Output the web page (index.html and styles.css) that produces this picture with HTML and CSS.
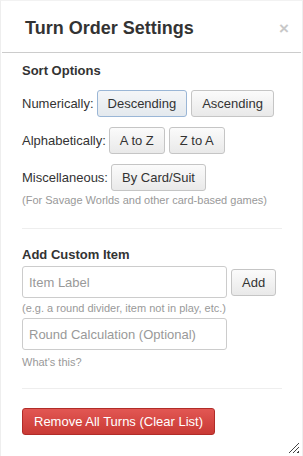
FILE: index.html
```html
<!DOCTYPE html>
<html>
  <head>
    <meta charset="utf-8">
    <title>Turn Order Settings</title>
    <link rel="stylesheet" href="styles.css">
  </head>
  <body>
    <div class="dialog">
      <header class="dialog-header">
        <h3>Turn Order Settings</h3>
        <span class="close">&times;</span>
      </header>
      <section class="dialog-body">
        <h4>Sort Options</h4>
        <div class="row">
          <span class="label">Numerically:</span>
          <button class="btn active">Descending</button>
          <button class="btn">Ascending</button>
        </div>
        <div class="row">
          <span class="label">Alphabetically:</span>
          <button class="btn">A to Z</button>
          <button class="btn">Z to A</button>
        </div>
        <div class="row last">
          <span class="label">Miscellaneous:</span>
          <button class="btn">By Card/Suit</button>
        </div>
        <p class="help">(For Savage Worlds and other card-based games)</p>

        <hr>

        <h4 class="tight">Add Custom Item</h4>
        <div class="add-row">
          <input type="text" placeholder="Item Label">
          <button class="btn">Add</button>
        </div>
        <p class="help below">(e.g. a round divider, item not in play, etc.)</p>
        <input type="text" placeholder="Round Calculation (Optional)">
        <p class="help what">What's this?</p>

        <hr class="bottom">

        <button class="btn danger">Remove All Turns (Clear List)</button>
      </section>
      <span class="grip"></span>
    </div>
  </body>
</html>
```

FILE: styles.css
```css
body, html {
  margin: 0;
  height: 100%;
  background: #fff;
}
body {
  font-family: "Liberation Sans", Arial, sans-serif;
  font-size: 13px;
  color: #333;
}
.dialog {
  position: relative;
  box-sizing: border-box;
  height: 100%;
  border-left: 1px solid #eee;
  border-right: 1px solid #eee;
  border-top: 1px solid #f2f2f2;
}
.dialog-header {
  display: flex;
  align-items: center;
  height: 51px;
  padding: 0 12px 0 23px;
  margin: 0 1px;
  border-bottom: 1px solid #ccc;
}
.dialog-header h3 {
  flex: 1;
  margin: 0;
  padding-top: 4px;
  font-size: 18px;
  font-weight: 700;
  color: #333;
}
.close {
  font-size: 17px;
  font-weight: 700;
  color: #c8c8c8;
  padding-top: 4px;
}
.dialog-body {
  padding: 10px 20px 0 21px;
}
h4 {
  margin: 0 0 11px;
  font-size: 13px;
  line-height: 16px;
  font-weight: 700;
}
h4.tight {
  margin-bottom: 3px;
}
.row {
  display: flex;
  align-items: center;
  margin-bottom: 10px;
}
.row.last {
  margin-bottom: 3px;
}
.label {
  margin-right: 3px;
}
.btn {
  font-family: inherit;
  font-size: 13px;
  color: #333;
  height: 27px;
  padding: 0 10px;
  margin-right: 4px;
  border: 1px solid #c5c5c5;
  border-radius: 3px;
  background: linear-gradient(#fbfbfb, #e9e9e9);
  cursor: pointer;
}
.btn.active {
  border-color: #9ab6d6;
  background: linear-gradient(#f4f6f8, #e4e9ee);
}
.help {
  margin: 4px 0 0;
  font-size: 11px;
  line-height: 13px;
  color: #999;
}
.row.last + .help {
  margin-top: 0;
}
.help.what {
  margin-top: 6px;
}
hr {
  border: none;
  border-top: 1px solid #eee;
  margin: 21px 0 18px;
}
hr.bottom {
  margin: 19px 0 19px;
}
.add-row {
  display: flex;
  align-items: center;
}
input {
  box-sizing: border-box;
  width: 205px;
  height: 32px;
  padding: 0 6px;
  margin: 0 4px 0 0;
  font-family: inherit;
  font-size: 13px;
  border: 1px solid #ccc;
  border-radius: 3px;
}
input::placeholder {
  color: #999;
}
.help.below {
  margin-bottom: 3px;
}
.danger {
  padding: 0 11px;
  color: #fff;
  border-color: #b12c28;
  background: linear-gradient(#e25753, #c93a35);
}
.grip {
  position: absolute;
  right: 3px;
  bottom: 3px;
  width: 11px;
  height: 11px;
  background: repeating-linear-gradient(135deg, transparent 0 2px, #444 2px 3px);
  clip-path: polygon(100% 0, 100% 100%, 0 100%);
}
```
